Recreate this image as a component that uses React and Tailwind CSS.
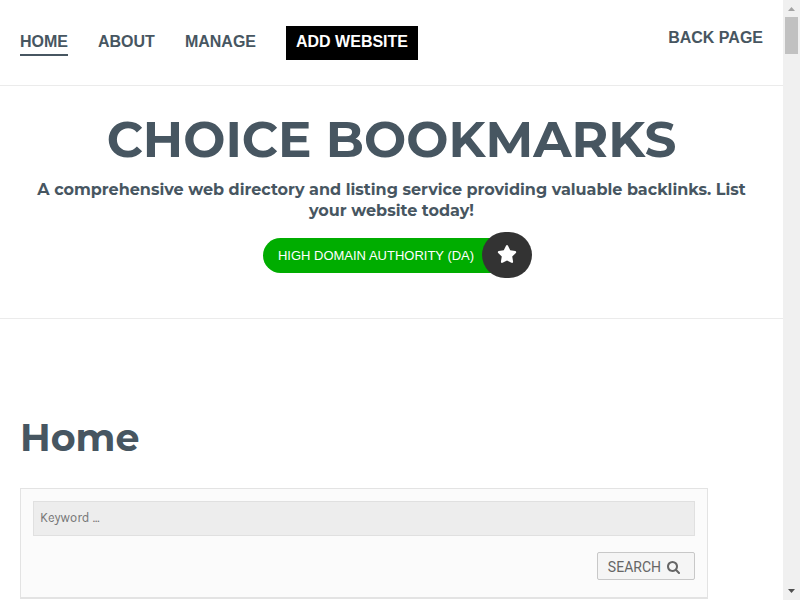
import React, { useState } from "react";
import { FaStar } from "react-icons/fa6";

const NAV = [
  { label: "HOME", href: "#home", active: true },
  { label: "ABOUT", href: "#about" },
  { label: "MANAGE", href: "#manage" },
];

function Header() {
  return (
    <header className="flex items-start justify-between border-b border-[#ebebeb] px-5 pt-[26px] pb-[25px] font-['Liberation_Sans',sans-serif] text-base leading-5 font-bold">
      <nav className="flex items-start gap-[30px]">
        {NAV.map((item) => (
          <a
            key={item.label}
            href={item.href}
            className={`mt-[6px] border-b-2 pb-[2px] ${
              item.active ? "border-[#475661]" : "border-transparent"
            }`}
          >
            {item.label}
          </a>
        ))}
        <a href="#add" className="bg-black px-[10px] pt-[6px] pb-2 text-white">
          ADD WEBSITE
        </a>
      </nav>
      <a href="#back" className="mt-[2px]">
        BACK PAGE
      </a>
    </header>
  );
}

function Hero() {
  return (
    <section className="flex flex-col items-center border-b border-[#ebebeb] px-5 pt-6 pb-10 text-center">
      <h1 className="font-[Montserrat,Inter,sans-serif] text-[50px] leading-[60px] font-bold whitespace-nowrap">
        CHOICE BOOKMARKS
      </h1>
      <p className="mt-[9px] font-[Montserrat,Inter,sans-serif] text-base leading-[21px] font-bold">
        A comprehensive web directory and listing service providing valuable backlinks. List your
        website today!
      </p>
      <button type="button" className="mt-[11px] ml-3 flex items-center">
        <span className="-mr-7 rounded-l-full bg-[#00ad00] pr-9 pl-[15px] font-['Liberation_Sans',sans-serif] text-[13px] leading-[35px] text-white">
          HIGH DOMAIN AUTHORITY (DA)
        </span>
        <span className="z-10 flex h-[46px] w-[50px] items-center justify-center rounded-full bg-[#333] pb-[2px] text-white">
          <FaStar size={20} />
        </span>
      </button>
    </section>
  );
}

function SearchIcon() {
  return (
    <svg width="13" height="13" viewBox="0 0 1664 1664" fill="currentColor" aria-hidden="true">
      <path d="M1152 704q0-185-131.500-316.500T704 256 387.500 387.500 256 704t131.500 316.500T704 1152t316.500-131.500T1152 704zm512 832q0 52-38 90t-90 38q-54 0-90-38l-343-342q-179 124-399 124-143 0-273.500-55.500t-225-150-150-225T0 704t55.500-273.500 150-225 225-150T704 0t273.500 55.500 225 150 150 225T1408 704q0 220-124 399l343 343q37 37 37 90z" />
    </svg>
  );
}

function SearchForm() {
  const [keyword, setKeyword] = useState("");

  return (
    <form
      onSubmit={(e) => e.preventDefault()}
      className="mr-[55px] flex flex-col items-end gap-4 border border-b-2 border-[#e3e3e3] bg-[#fbfbfb] p-3 pb-[17px]"
    >
      <input
        type="text"
        aria-label="Keyword"
        placeholder="Keyword ..."
        value={keyword}
        onChange={(e) => setKeyword(e.target.value)}
        className="h-[35px] w-full border border-[#e0e0e0] bg-[#ededed] px-[6px] pb-[2px] font-[Karla,'Work_Sans',Inter,sans-serif] text-[13px] text-[#555] placeholder:text-[#777]"
      />
      <button
        type="submit"
        className="flex h-7 items-center gap-[6px] rounded-xs border border-[#c8c8c8] bg-[#f5f5f5] pt-[2px] pr-[14px] pl-[10px] font-[Roboto,sans-serif] text-sm text-[#666]"
      >
        SEARCH <SearchIcon />
      </button>
    </form>
  );
}

// Always-visible page scrollbar
function Scrollbar() {
  return (
    <div className="flex w-[17px] shrink-0 flex-col items-center justify-between bg-[#f0f0f0]" aria-hidden="true">
      <div className="flex flex-col items-center">
        <svg width="17" height="17" viewBox="0 0 17 17">
          <path d="M5 11 8.500 7 12 11Z" fill="#a3a3a3" />
        </svg>
        <div className="h-[37px] w-[13px] bg-[#c1c1c1]" />
      </div>
      <svg width="17" height="17" viewBox="0 0 17 17">
        <path d="M5 6 8.500 10 12 6Z" fill="#505050" />
      </svg>
    </div>
  );
}

export default function App() {
  return (
    <div className="flex h-screen overflow-hidden bg-white text-[#475661]">
      <div className="min-w-0 flex-1 overflow-hidden">
        <Header />
        <Hero />
        <main className="px-5 pt-[95px]">
          <h2 className="mb-[26px] font-[Montserrat,Inter,sans-serif] text-[38px] leading-[48px] font-bold">
            Home
          </h2>
          <SearchForm />
        </main>
      </div>
      <Scrollbar />
    </div>
  );
}
